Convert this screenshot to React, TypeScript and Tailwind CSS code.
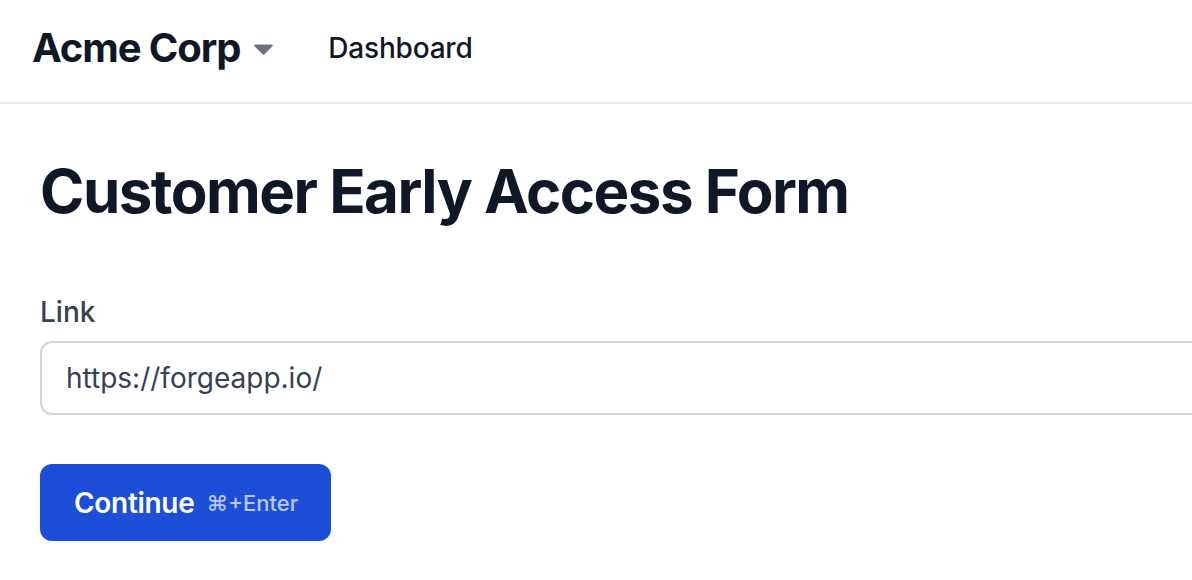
export default function App() {
  return (
    <div className="min-h-screen w-full overflow-hidden bg-white font-['Inter',sans-serif]">
      {/* top nav */}
      <header className="flex h-[104px] items-center border-b-2 border-gray-200 pb-[6px] pl-[32px]">
        <button className="flex items-center gap-[14px]">
          <span className="text-[40px] font-bold leading-[56px] tracking-[-1.1px] text-gray-900">Acme Corp</span>
          <svg width="19" height="11" viewBox="0 0 19 11" className="mt-[2px]">
            <path d="M1.2 0.5h16.6a1 1 0 0 1 .7 1.7l-8.3 8.2a1 1 0 0 1-1.4 0L.5 2.2A1 1 0 0 1 1.2 .5z" fill="#6b7280" />
          </svg>
        </button>
        <nav className="ml-[55px] text-[28px] font-medium leading-[40px] tracking-[-0.2px] text-gray-900">Dashboard</nav>
      </header>

      <main className="pl-[40px] pt-[51px]">
        <h1 className="text-[60px] font-bold leading-[72px] tracking-[-1.5px] text-gray-900">
          Customer Early Access Form
        </h1>

        <div className="mt-[65px]">
          <label className="block text-[28px] font-medium leading-[40px] text-gray-700">Link</label>
          <input
            defaultValue="https://forgeapp.io/"
            className="mt-[9px] block h-[74px] w-[1300px] rounded-[12px] border-2 border-gray-300 px-[24px] text-[28px] text-gray-700 outline-none"
          />
        </div>

        <button className="mt-[49px] flex h-[77px] items-center gap-[12px] rounded-[12px] bg-[#1d4ed8] pl-[34px] pr-[33px]">
          <span className="text-[28px] font-semibold leading-[40px] tracking-[-0.3px] text-white">Continue</span>
          <span className="text-[22px] font-medium leading-[28px] text-[#b7c8f2]">⌘+Enter</span>
        </button>
      </main>
    </div>
  );
}
